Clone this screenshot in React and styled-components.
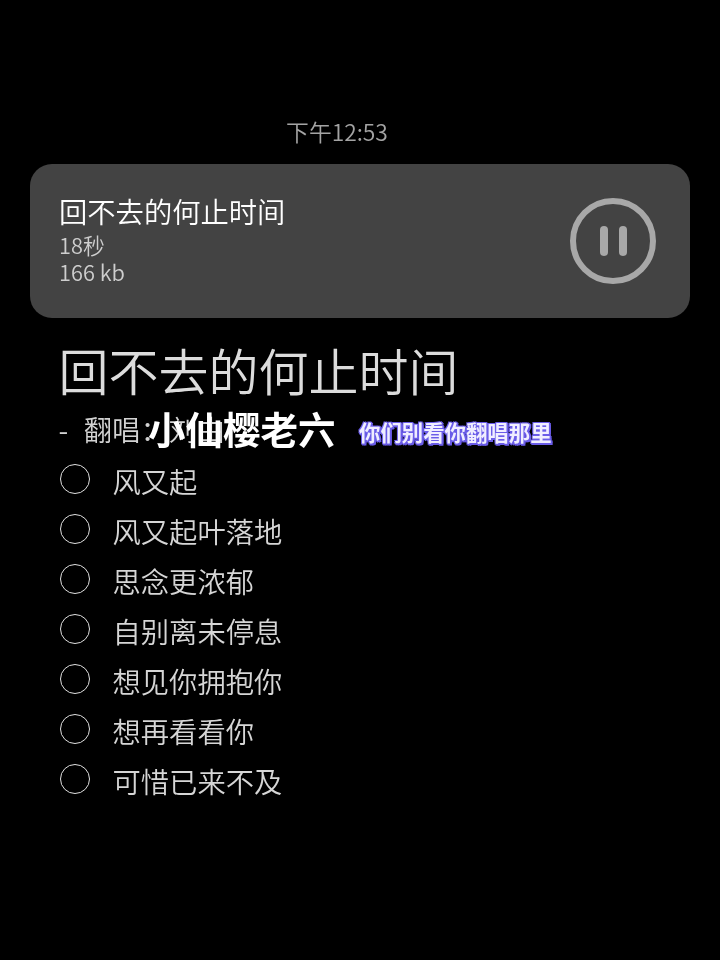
import React from "react";
import styled, { createGlobalStyle } from "styled-components";

const GlobalStyle = createGlobalStyle`
  html, body {
    margin: 0;
    padding: 0;
    background: #000;
    font-family: "Noto Sans CJK SC", "Noto Sans", sans-serif;
    font-weight: 350;
  }
`;

const Page = styled.div`
  width: 720px;
  height: 960px;
  padding: 116px 30px 0;
  box-sizing: border-box;
  overflow: hidden;
  will-change: transform;
`;

const Time = styled.div`
  text-align: center;
  padding-right: 46px;
  font-size: 22.8px;
  line-height: 32px;
  color: #a4a4a4;
  margin-bottom: 16px;
`;

const Card = styled.div`
  height: 154px;
  border-radius: 22px;
  background: #434343;
  display: flex;
  align-items: center;
  justify-content: space-between;
  padding: 0 33px 6px 29px;
  box-sizing: border-box;
`;

const CardText = styled.div`
  display: flex;
  flex-direction: column;
`;

const CardTitle = styled.div`
  font-size: 28.3px;
  line-height: 40px;
  color: #fff;
`;

const CardMeta = styled.div`
  font-size: 21.8px;
  line-height: 27px;
  color: #cecece;
`;

const PauseIcon = styled.svg`
  width: 88px;
  height: 88px;
  display: block;
  margin-top: 6px;
`;

const Lyrics = styled.div`
  position: relative;
  padding: 16px 0 0 28.5px;
`;

const BigTitle = styled.div`
  font-size: 50px;
  line-height: 70px;
  color: #dcdcdc;
`;

const Singer = styled.div`
  font-size: 28.3px;
  line-height: 46px;
  color: #d2d2d2;
  white-space: pre;
  word-spacing: 1.5px;
  padding-top: 2px;
`;

const List = styled.div`
  display: flex;
  flex-direction: column;
  margin-top: 7px;
`;

const Row = styled.div`
  display: flex;
  align-items: flex-start;
  height: 50px;
  gap: 23px;
`;

const Radio = styled.span`
  width: 30px;
  height: 30px;
  margin: 5px 0 0 1px;
  box-sizing: border-box;
  border: 1.5px solid #e0e0e0;
  border-radius: 50%;
  flex: none;
`;

const Line = styled.span`
  font-size: 28.3px;
  line-height: 44px;
  color: #d6d6d6;
`;

const Watermark = styled.div`
  position: absolute;
  left: 118px;
  top: 85px;
  font-size: 37.5px;
  line-height: 50px;
  font-weight: 700;
  color: #fff;
`;

const Caption = styled.div`
  position: absolute;
  left: 329px;
  top: 98px;
  font-size: 21.4px;
  line-height: 32px;
  font-weight: 700;
  color: #f0eeff;
  text-shadow: 2px 2px 0 #6a5ce8, -1px 1px 0 #6a5ce8, 1px -1px 0 #6a5ce8, -1px -1px 0 #6a5ce8, 2px 0 0 #6a5ce8, 0 2px 0 #6a5ce8;
`;

const lines = ["风又起", "风又起叶落地", "思念更浓郁", "自别离未停息", "想见你拥抱你", "想再看看你", "可惜已来不及"];

export default function App() {
  return (
    <Page>
      <GlobalStyle />
      <Time>下午12:53</Time>
      <Card>
        <CardText>
          <CardTitle>回不去的何止时间</CardTitle>
          <CardMeta>18秒</CardMeta>
          <CardMeta>166 kb</CardMeta>
        </CardText>
        <PauseIcon viewBox="0 0 88 88">
          <circle cx="44" cy="44" r="40" fill="none" stroke="#a8a8a8" strokeWidth="6" />
          <rect x="31" y="29" width="8" height="30" rx="4" fill="#a8a8a8" />
          <rect x="50" y="29" width="8" height="30" rx="4" fill="#a8a8a8" />
        </PauseIcon>
      </Card>
      <Lyrics>
        <BigTitle>回不去的何止时间</BigTitle>
        <Singer>{"-  翻唱：刘由"}</Singer>
        <List>
          {lines.map((line) => (
            <Row key={line}>
              <Radio />
              <Line>{line}</Line>
            </Row>
          ))}
        </List>
        <Watermark>小仙樱老六</Watermark>
        <Caption>你们别看你翻唱那里</Caption>
      </Lyrics>
    </Page>
  );
}
